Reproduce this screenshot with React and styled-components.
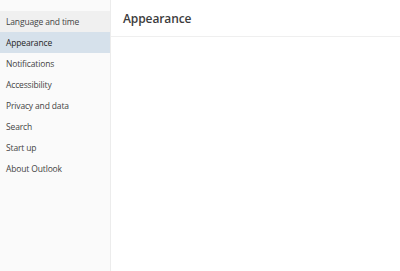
import React from "react";
import styled, { createGlobalStyle } from "styled-components";

const GlobalStyle = createGlobalStyle`
  html, body {
    margin: 0;
    padding: 0;
    background: #ffffff;
  }
  body {
    font-family: "Open Sans", "Noto Sans", sans-serif;
  }
`;

const items = [
  "Language and time",
  "Appearance",
  "Notifications",
  "Accessibility",
  "Privacy and data",
  "Search",
  "Start up",
  "About Outlook",
];

const App = () => {
  const active = "Appearance";
  const hovered = "Language and time";
  return (
    <>
      <GlobalStyle />
      <Layout>
        <Sidebar>
          {items.map((item) => (
            <NavItem
              key={item}
              $active={item === active}
              $hovered={item === hovered}
            >
              {item}
            </NavItem>
          ))}
        </Sidebar>
        <Main>
          <Header>
            <Title>Appearance</Title>
          </Header>
        </Main>
      </Layout>
    </>
  );
};

export default App;

const Layout = styled.div`
  display: flex;
  width: 400px;
  height: 271px;
  overflow: hidden;
`;

const Sidebar = styled.nav`
  width: 110px;
  flex-shrink: 0;
  background: #fafafa;
  border-right: 1px solid #ececec;
  padding-top: 11px;
  display: flex;
  flex-direction: column;
`;

const NavItem = styled.div`
  height: 21px;
  display: flex;
  align-items: center;
  padding-left: 6px;
  font-size: 8.5px;
  letter-spacing: -0.15px;
  color: ${(p) => (p.$active ? "#262626" : "#444444")};
  background: ${(p) =>
    p.$active ? "#d6e1eb" : p.$hovered ? "#f0f0f0" : "transparent"};
  white-space: nowrap;
`;

const Main = styled.main`
  flex: 1;
  display: flex;
  flex-direction: column;
`;

const Header = styled.div`
  height: 37px;
  display: flex;
  align-items: center;
  padding-left: 12px;
  border-bottom: 1px solid #efefef;
  box-sizing: border-box;
`;

const Title = styled.h1`
  margin: 0;
  font-size: 12px;
  font-weight: 600;
  color: #3c3c3c;
  letter-spacing: -0.1px;
`;
